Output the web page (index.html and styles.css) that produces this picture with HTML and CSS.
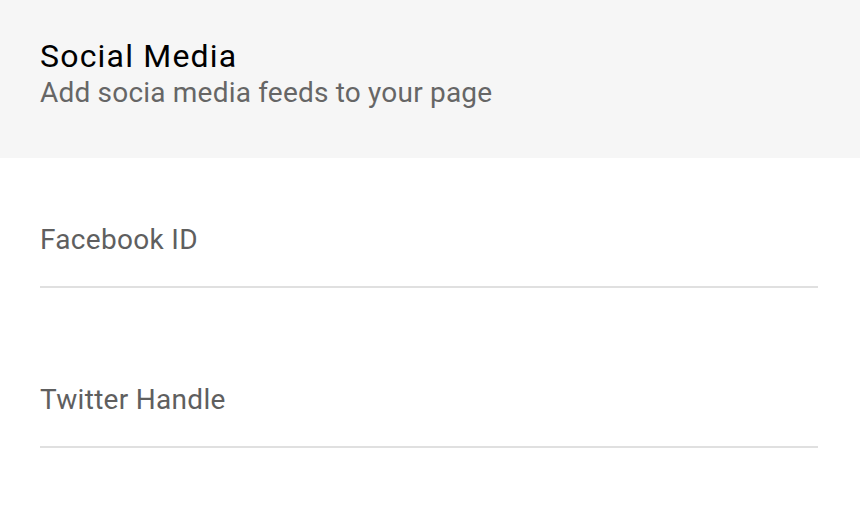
FILE: index.html
```html
<!DOCTYPE html>
<html lang="en">
<head>
    <meta charset="UTF-8">
    <meta name="viewport" content="width=device-width, initial-scale=1.0">
    <title>Social Media</title>
    <link rel="stylesheet" href="styles.css">
</head>
<body>
    <div class="panel-header">
        <h1>Social Media</h1>
        <p>Add socia media feeds to your page</p>
    </div>
    <div class="panel-body">
        <div class="field">
            <label for="facebook">Facebook ID</label>
            <input id="facebook" type="text">
        </div>
        <div class="field">
            <label for="twitter">Twitter Handle</label>
            <input id="twitter" type="text">
        </div>
    </div>
</body>
</html>
```

FILE: styles.css
```css
* {
    margin: 0;
    padding: 0;
    box-sizing: border-box;
}

body {
    background: #fff;
    font-family: Roboto, "Noto Sans", sans-serif;
}

.panel-header {
    background: #f6f6f6;
    height: 158px;
    padding: 36px 40px 0;
}

.panel-header h1 {
    font-size: 32px;
    font-weight: 400;
    line-height: 40px;
    letter-spacing: 1.2px;
    color: #000;
}

.panel-header p {
    font-size: 28px;
    line-height: 34px;
    letter-spacing: 0.2px;
    color: #666;
}

.panel-body {
    padding: 0 42px 0 40px;
}

.field {
    display: flex;
    flex-direction: column;
    padding-top: 94px;
}

.field:first-child {
    padding-top: 64px;
}

.field label {
    font-size: 28px;
    line-height: 36px;
    letter-spacing: 0.3px;
    color: #5f5f5f;
}

.field input {
    border: none;
    border-bottom: 2px solid #e0e0e0;
    height: 30px;
    outline: none;
    background: transparent;
    font: inherit;
}
```
